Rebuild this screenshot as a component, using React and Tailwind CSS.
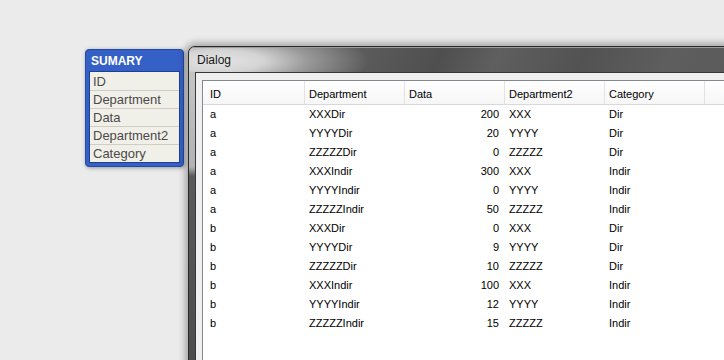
import React from 'react';

const fields = ['ID', 'Department', 'Data', 'Department2', 'Category'];

const rows = [
  ['a', 'XXXDir', 200, 'XXX', 'Dir'],
  ['a', 'YYYYDir', 20, 'YYYY', 'Dir'],
  ['a', 'ZZZZZDir', 0, 'ZZZZZ', 'Dir'],
  ['a', 'XXXIndir', 300, 'XXX', 'Indir'],
  ['a', 'YYYYIndir', 0, 'YYYY', 'Indir'],
  ['a', 'ZZZZZIndir', 50, 'ZZZZZ', 'Indir'],
  ['b', 'XXXDir', 0, 'XXX', 'Dir'],
  ['b', 'YYYYDir', 9, 'YYYY', 'Dir'],
  ['b', 'ZZZZZDir', 10, 'ZZZZZ', 'Dir'],
  ['b', 'XXXIndir', 100, 'XXX', 'Indir'],
  ['b', 'YYYYIndir', 12, 'YYYY', 'Indir'],
  ['b', 'ZZZZZIndir', 15, 'ZZZZZ', 'Indir'],
];

function SummaryBox() {
  return (
    <div className="ml-[85px] mt-[49px] w-[99px] shrink-0 rounded-[4px] bg-[#3560c6] border border-[#2448a8] shadow-[1px_1px_4px_rgba(0,0,0,0.35)] px-[3px] pb-[3px]">
      <div className="h-[21px] pl-[2px] flex items-center text-[12px] font-bold text-white leading-none">
        SUMARY
      </div>
      <div className="bg-[#f1f0e8] border border-[#1f3f96]">
        {fields.map((f, i) => (
          <div
            key={f}
            className={`h-[18px] pl-[3px] flex items-center text-[13px] leading-none text-[#4a4a4a] ${i > 0 ? 'border-t border-[#cfcdc4]' : ''}`}
          >
            {f}
          </div>
        ))}
      </div>
    </div>
  );
}

function DataTable() {
  return (
    <div className="bg-white border border-[#828790] text-[11px] text-black">
      <div className="flex h-[24px] bg-[linear-gradient(to_bottom,#ffffff,#f6f6f6)] border-b border-[#d8d8d8]">
        <div className="w-[102px] pl-[7px] pt-[4px] flex items-center border-r border-[#e2e2e2]">ID</div>
        <div className="w-[100px] pl-[4px] pt-[4px] flex items-center border-r border-[#e2e2e2]">Department</div>
        <div className="w-[100px] pl-[4px] pt-[4px] flex items-center border-r border-[#e2e2e2]">Data</div>
        <div className="w-[100px] pl-[4px] pt-[4px] flex items-center border-r border-[#e2e2e2]">Department2</div>
        <div className="w-[100px] pl-[4px] pt-[4px] flex items-center border-r border-[#e2e2e2]">Category</div>
        <div className="flex-1" />
      </div>
      {rows.map((r, i) => (
        <div key={i} className="flex h-[19px] items-center">
          <div className="w-[102px] pl-[7px]">{r[0]}</div>
          <div className="w-[100px] pl-[4px]">{r[1]}</div>
          <div className="w-[100px] pr-[6px] text-right">{r[2]}</div>
          <div className="w-[100px] pl-[4px]">{r[3]}</div>
          <div className="w-[100px] pl-[4px]">{r[4]}</div>
        </div>
      ))}
      <div className="h-[60px]" />
    </div>
  );
}

export default function App() {
  return (
    <div className="w-[724px] h-[360px] overflow-hidden bg-[#ebebeb] flex items-start font-['Liberation_Sans',Arial,sans-serif]">
      <SummaryBox />
      <div className="ml-[4px] mt-[46px] w-[560px] h-[330px] shrink-0 flex flex-col rounded-t-[7px] border border-[#2a2a2a] bg-[#585858] shadow-[0_0_7px_3px_rgba(0,0,0,0.3)] overflow-hidden">
        <div className="h-[25px] shrink-0 flex items-center pl-[8px] text-[12px] text-[#151515] shadow-[inset_0_1px_0_#9c9c9c] bg-[radial-gradient(ellipse_150px_36px_at_30px_14px,#e4e4e4_0%,#d4d4d4_30%,rgba(170,170,170,0.75)_60%,rgba(88,88,88,0)_100%),linear-gradient(115deg,#707070_0%,#5c5c5c_30%,#4f4f4f_45%,#5f5f5f_55%,#525252_70%,#5e5e5e_85%,#5a5a5a_100%)]">
          Dialog
        </div>
        <div className="flex flex-1">
          <div className="w-[6px] shrink-0 bg-[linear-gradient(to_bottom,#c4c4c4_0px,#b2b2b2_95px,#5a5a5a_104px,#4a4a4a_100%)]" />
          <div className="flex-1 bg-[#f0f0f0] border-t border-l border-[#383838] pt-[7px] pl-[6px]">
            <DataTable />
          </div>
        </div>
      </div>
    </div>
  );
}
